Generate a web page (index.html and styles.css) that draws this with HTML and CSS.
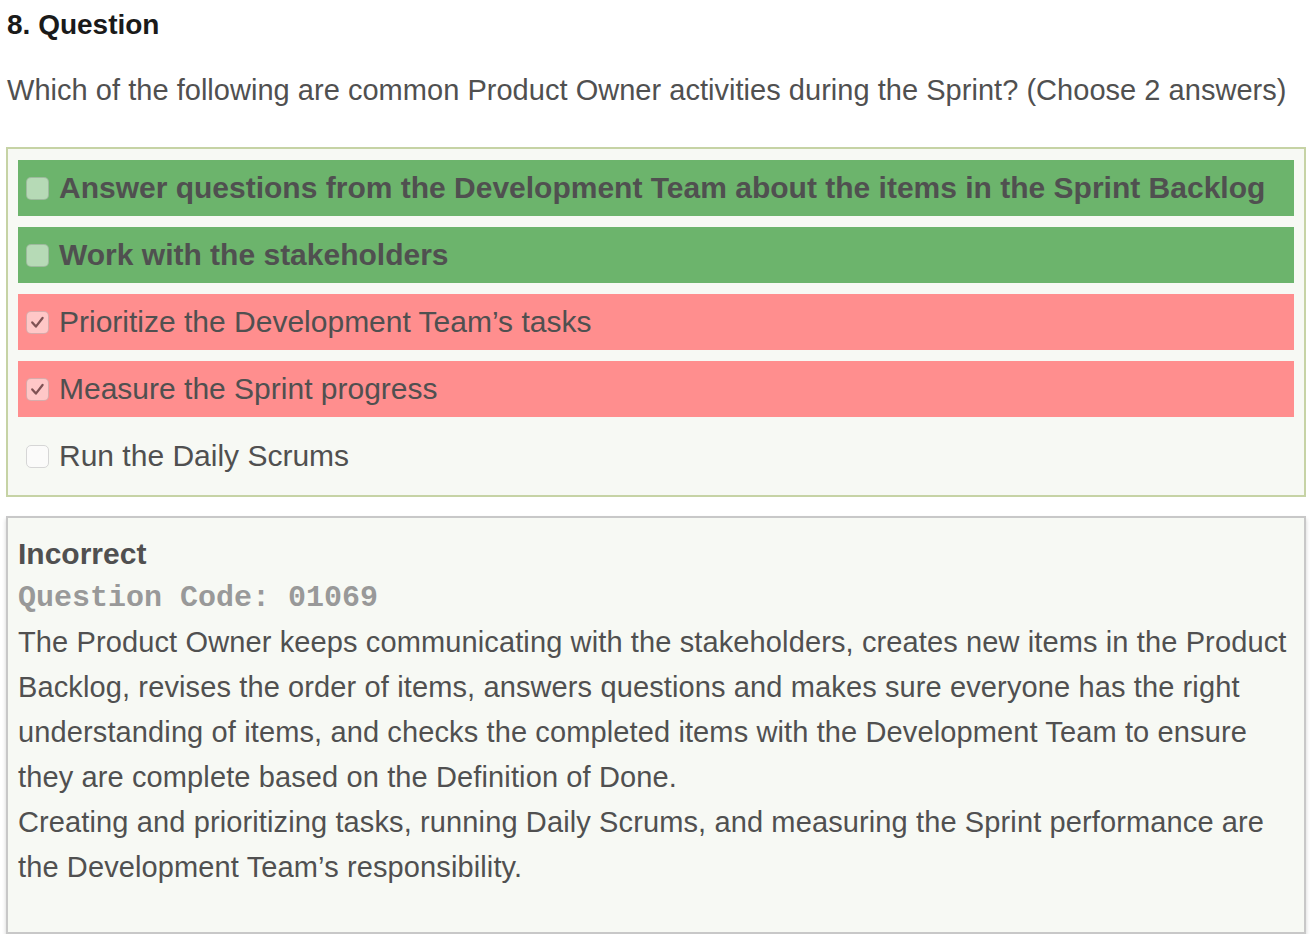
FILE: index.html
```html
<!DOCTYPE html>
<html>
<head>
<meta charset="utf-8">
<link rel="stylesheet" href="styles.css">
</head>
<body>
<div class="page">
  <h1 class="q-title">8. Question</h1>
  <p class="q-text">Which of the following are common Product Owner activities during the Sprint? (Choose 2 answers)</p>

  <div class="options">
    <div class="opt opt-correct">
      <span class="cb"></span>
      <span class="opt-label">Answer questions from the Development Team about the items in the Sprint Backlog</span>
    </div>
    <div class="opt opt-correct">
      <span class="cb"></span>
      <span class="opt-label">Work with the stakeholders</span>
    </div>
    <div class="opt opt-wrong">
      <span class="cb cb-checked"><svg viewBox="0 0 22 22" width="22" height="22"><path d="M5.5 11.5 L9.3 15.8 L16.3 6.8" fill="none" stroke="#7f5254" stroke-width="2.4" stroke-linecap="round" stroke-linejoin="round"/></svg></span>
      <span class="opt-label">Prioritize the Development Team’s tasks</span>
    </div>
    <div class="opt opt-wrong">
      <span class="cb cb-checked"><svg viewBox="0 0 22 22" width="22" height="22"><path d="M5.5 11.5 L9.3 15.8 L16.3 6.8" fill="none" stroke="#7f5254" stroke-width="2.4" stroke-linecap="round" stroke-linejoin="round"/></svg></span>
      <span class="opt-label">Measure the Sprint progress</span>
    </div>
    <div class="opt">
      <span class="cb cb-plain"></span>
      <span class="opt-label">Run the Daily Scrums</span>
    </div>
  </div>

  <div class="explain">
    <div class="ex-status">Incorrect</div>
    <div class="ex-code">Question Code: 01069</div>
    <p class="ex-text">The Product Owner keeps communicating with the stakeholders, creates new items in the Product Backlog, revises the order of items, answers questions and makes sure everyone has the right understanding of items, and checks the completed items with the Development Team to ensure they are complete based on the Definition of Done.<br>Creating and prioritizing tasks, running Daily Scrums, and measuring the Sprint performance are the Development Team’s responsibility.</p>
  </div>
</div>
</body>
</html>
```

FILE: styles.css
```css
html, body {
  margin: 0;
  padding: 0;
  background: #ffffff;
}
body {
  font-family: "Liberation Sans", Arial, sans-serif;
  color: #505050;
}
.page {
  padding: 0 8px 0 6px;
}
.q-title {
  margin: 0;
  padding: 8px 0 0 1px;
  font-size: 28px;
  line-height: 34px;
  font-weight: bold;
  color: #1a1a1a;
}
.q-text {
  margin: 0;
  padding: 30px 0 0 1px;
  font-size: 29px;
  line-height: 36px;
  letter-spacing: 0.03px;
  color: #505050;
}
.options {
  margin-top: 39px;
  border: 2px solid #c6d3a5;
  background: #f7f9f4;
  padding: 11px 10px 11px 10px;
  display: flex;
  flex-direction: column;
  gap: 11px;
}
.opt {
  height: 56px;
  display: flex;
  align-items: center;
  padding-left: 8px;
  gap: 10px;
  font-size: 30px;
}
.opt-correct {
  background: #6cb46c;
  font-weight: bold;
}
.opt-wrong {
  background: #ff8e8e;
}
.cb {
  width: 21px;
  height: 21px;
  border-radius: 5px;
  border: 1px solid rgba(60, 60, 60, 0.2);
  background: rgba(255, 255, 255, 0.5);
  flex: none;
  display: flex;
  align-items: center;
  justify-content: center;
}
.cb svg {
  display: block;
}
.cb-plain {
  background: #fbfbfa;
  border-color: #d6d6d6;
}
.opt-label {
  color: #505050;
}
.explain {
  margin-top: 19px;
  border: 2px solid #c8c8c8;
  box-shadow: 0 3px 4px rgba(0, 0, 0, 0.18);
  background: #f7f9f4;
  padding: 18px 10px 42px 10px;
}
.ex-status {
  font-size: 30px;
  line-height: 36px;
  font-weight: bold;
  color: #505050;
}
.ex-code {
  font-family: "Liberation Mono", "Courier New", monospace;
  font-weight: bold;
  font-size: 30px;
  line-height: 44px;
  padding-top: 4px;
  color: #999999;
}
.ex-text {
  margin: 0;
  font-size: 29px;
  line-height: 45px;
  letter-spacing: 0.12px;
  color: #505050;
}
```
